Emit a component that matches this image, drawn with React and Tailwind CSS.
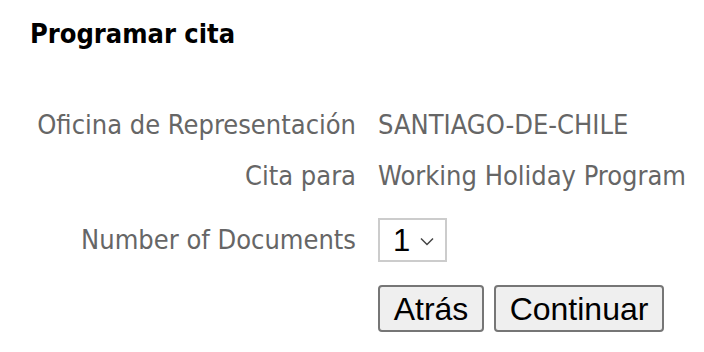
import React from "react";

const lbl = "text-right text-[#666666]";
const val = "text-[#666666]";

export default function App() {
  return (
    <div className="w-[704px] h-[352px] bg-white overflow-hidden" style={{ fontFamily: '"DejaVu Sans Condensed", "DejaVu Sans", sans-serif' }}>
      <div className="pl-[30px] pt-[18px]">
        <h1 className="text-[27px] leading-[32px] font-bold text-black">Programar cita</h1>
      </div>
      <div className="mt-[59px] grid grid-cols-[356px_1fr] gap-x-[22px] text-[27px] leading-[32px]">
        <div className={lbl}>Oficina de Representación</div>
        <div className={val}>SANTIAGO-DE-CHILE</div>
        <div className={lbl + " mt-[19px]"}>Cita para</div>
        <div className={val + " mt-[19px]"}>Working Holiday Program</div>
        <div className={lbl + " mt-[26px] h-[44px] flex items-center justify-end"}>Number of Documents</div>
        <div className="mt-[26px]">
          <div className="w-[69px] h-[44px] border-2 border-[#cccccc] flex items-center pl-[13px] gap-[10px]" style={{ fontFamily: '"Liberation Sans", Arial, sans-serif' }}>
            <span className="text-[31px] leading-none text-black">1</span>
            <svg width="14" height="9" viewBox="0 0 14 9" className="mt-[2px]">
              <path d="M1 1.5 L7 7.5 L13 1.5" fill="none" stroke="#444" strokeWidth="1.5" />
            </svg>
          </div>
        </div>
        <div />
        <div className="mt-[23px] flex gap-[10px]" style={{ fontFamily: '"Liberation Sans", Arial, sans-serif' }}>
          <button className="w-[106px] h-[47px] border-2 border-[#767676] rounded-[4px] bg-[#efefef] text-[32px] leading-none text-black">Atrás</button>
          <button className="w-[170px] h-[47px] border-2 border-[#767676] rounded-[4px] bg-[#efefef] text-[32px] leading-none text-black">Continuar</button>
        </div>
      </div>
    </div>
  );
}
